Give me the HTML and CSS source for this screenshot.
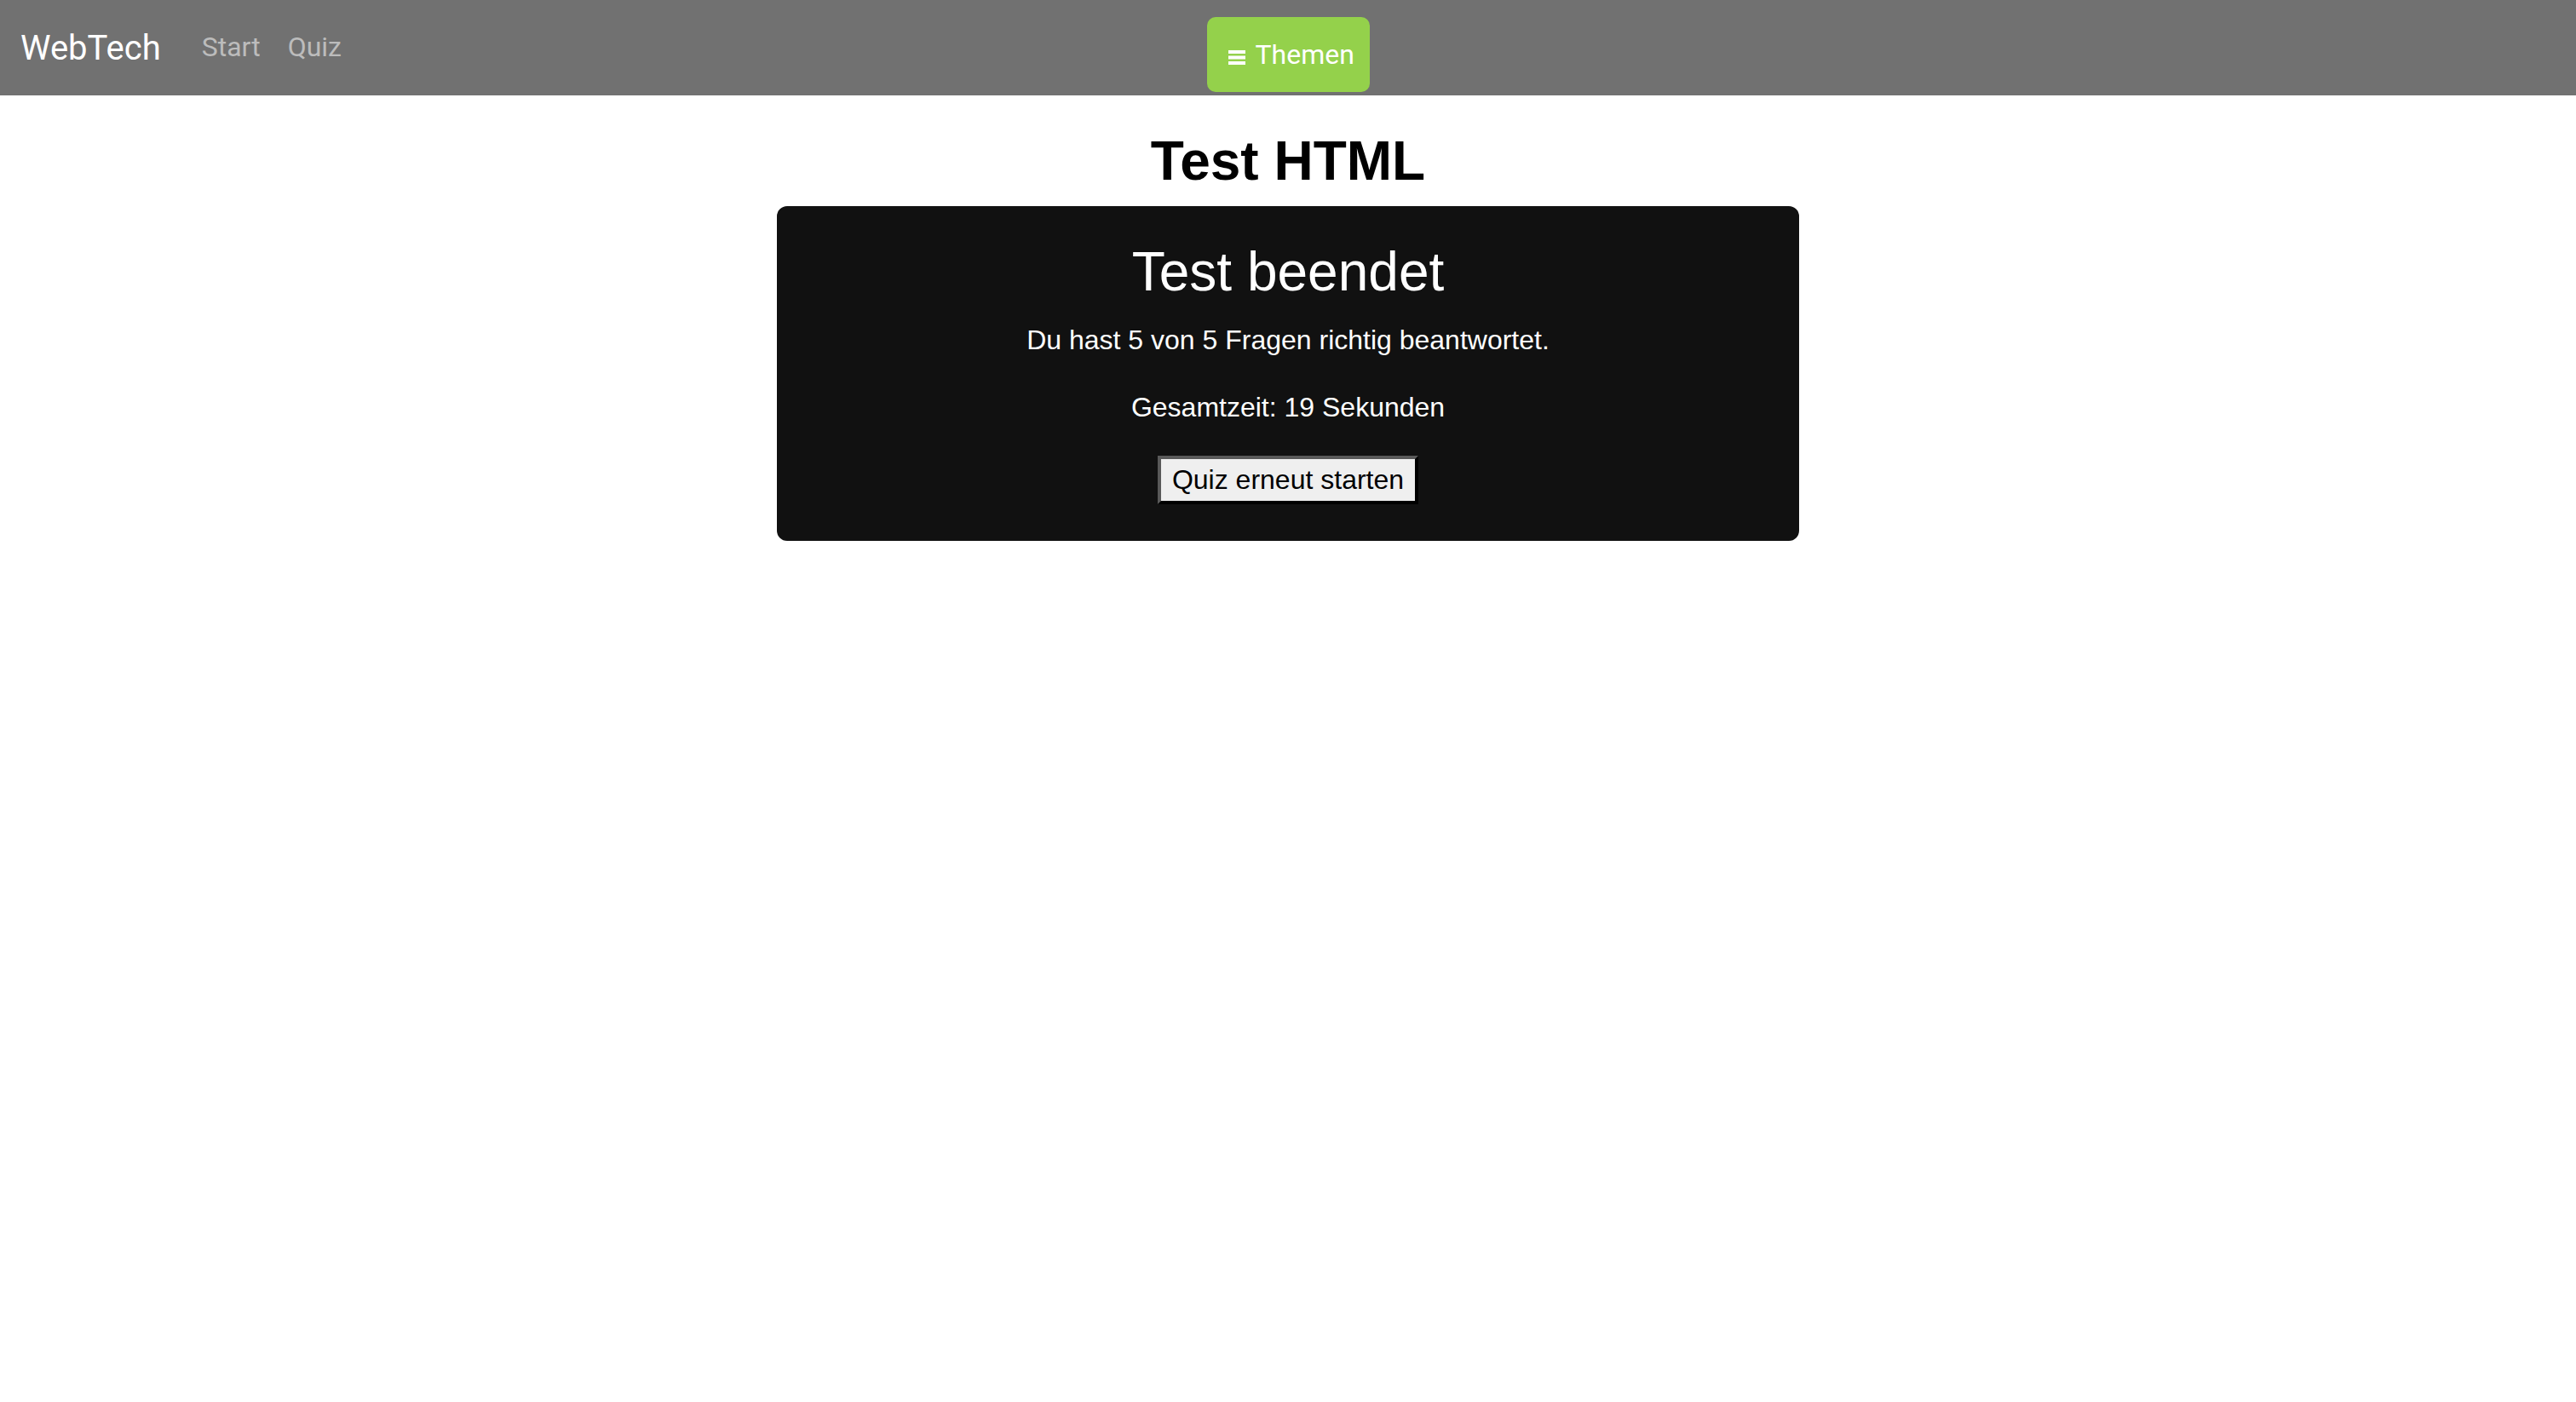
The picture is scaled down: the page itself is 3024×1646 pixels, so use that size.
FILE: index.html
```html
<!DOCTYPE html>
<html lang="de">
<head>
<meta charset="utf-8">
<title>Test HTML</title>
<link rel="stylesheet" href="styles.css">
</head>
<body>
<nav class="navbar">
  <div class="nav-left">
    <a class="brand" href="#">WebTech</a>
    <a class="nav-link" href="#">Start</a>
    <a class="nav-link" href="#">Quiz</a>
  </div>
  <button class="topics" type="button">
    <svg class="burger" width="20" height="17" viewBox="0 0 20 17" aria-hidden="true">
      <rect x="0" y="0" width="20" height="4" fill="#fff"/>
      <rect x="0" y="6.5" width="20" height="4" fill="#fff"/>
      <rect x="0" y="13" width="20" height="4" fill="#fff"/>
    </svg>
    <span>Themen</span>
  </button>
  <div class="nav-right"></div>
</nav>
<main class="main">
  <h1 class="title">Test HTML</h1>
  <section class="card">
    <h2 class="card-title">Test beendet</h2>
    <p class="result">Du hast 5 von 5 Fragen richtig beantwortet.</p>
    <p class="time">Gesamtzeit: 19 Sekunden</p>
    <button class="restart" type="button">Quiz erneut starten</button>
  </section>
</main>
</body>
</html>
```

FILE: styles.css
```css
* { box-sizing: border-box; }

html, body {
  margin: 0;
  padding: 0;
  background: #fff;
  font-family: "Liberation Sans", Arial, sans-serif;
}

.navbar {
  height: 112px;
  background: #717171;
  display: grid;
  grid-template-columns: 1fr auto 1fr;
  padding: 0 24px;
}

.nav-left {
  display: flex;
  align-items: flex-start;
  align-self: start;
  margin-top: 27px;
  font-family: Roboto, "Noto Sans", sans-serif;
}

.brand {
  font-size: 40px;
  line-height: 60px;
  color: #fff;
  text-decoration: none;
  margin-right: 32px;
}

.nav-link {
  font-size: 32px;
  line-height: 48px;
  margin-top: 4px;
  color: #bcbcbc;
  text-decoration: none;
  padding: 0 16px;
}

.topics {
  align-self: start;
  margin-top: 20px;
  height: 88px;
  width: 191px;
  padding: 0 20px 0 25px;
  border: 0;
  border-radius: 10px;
  background: #94d14b;
  color: #fff;
  font-family: Roboto, "Noto Sans", sans-serif;
  font-size: 32px;
  display: flex;
  align-items: center;
  gap: 12px;
}

.burger {
  flex: none;
  margin-top: 6px;
}

.main {
  text-align: center;
}

.title {
  margin: 40px 0 16px;
  font-size: 64px;
  line-height: 74px;
  font-weight: bold;
  color: #000;
}

.card {
  width: 1200px;
  margin: 0 auto;
  background: #111;
  color: #fff;
  border-radius: 12px;
  padding: 40px 0 43px;
}

.card-title {
  margin: 0;
  font-size: 64px;
  line-height: 74px;
  font-weight: normal;
}

.result, .time {
  font-size: 32px;
  line-height: 37px;
  margin: 0;
}

.result { margin-top: 25px; }
.time { margin-top: 42px; }

.restart {
  margin-top: 38px;
  font-family: "Liberation Sans", Arial, sans-serif;
  font-size: 32px;
  line-height: 37px;
  padding: 6px 13px;
  background: #efefef;
  color: #000;
  border: 4px solid;
  border-color: #595959 #000 #000 #595959;
}
```
